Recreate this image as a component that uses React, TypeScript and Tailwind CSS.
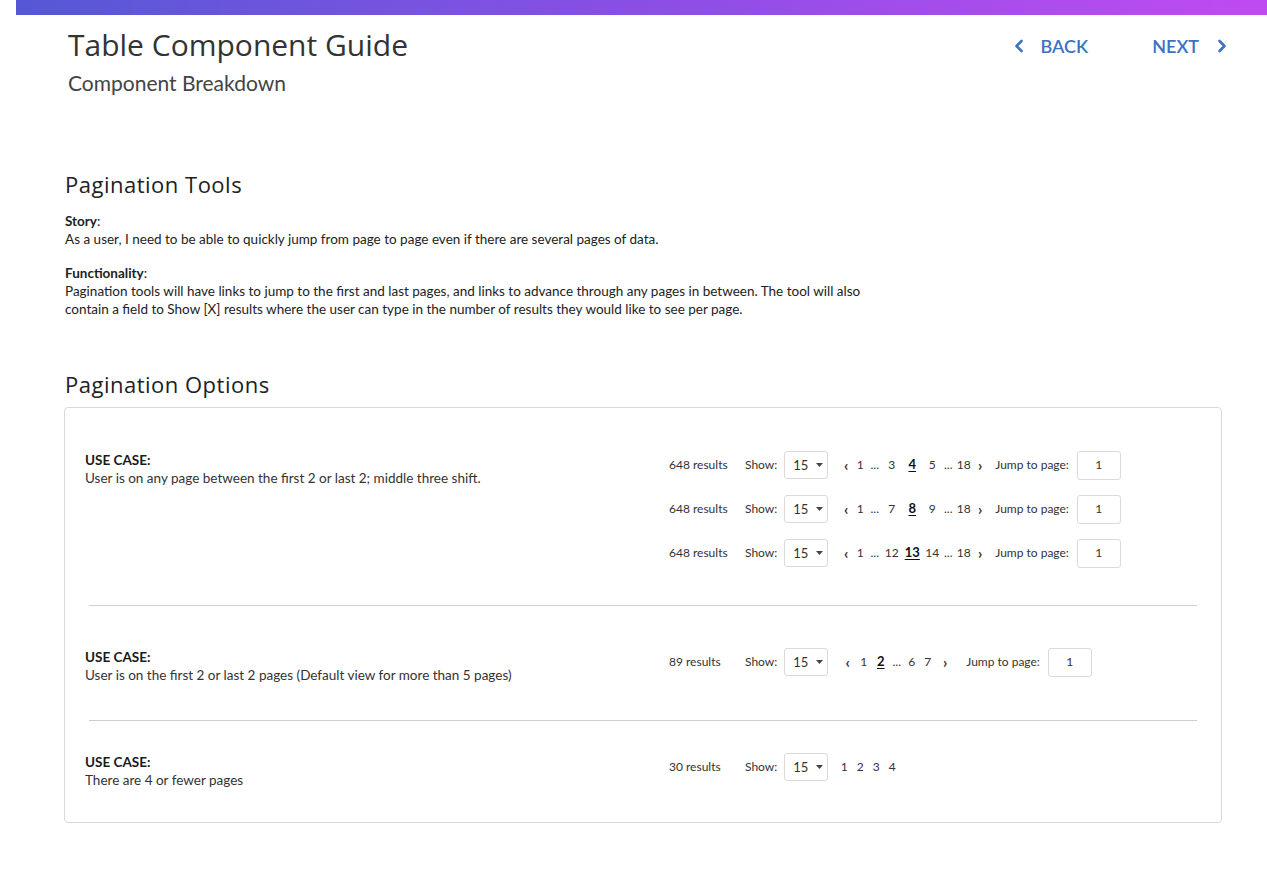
import React from "react";

const Chevron = ({ dir }: { dir: "left" | "right" }) => (
  <svg width="10" height="14" viewBox="0 0 10 14" fill="none" stroke="currentColor" strokeWidth="2.6" strokeLinecap="round" strokeLinejoin="round">
    {dir === "left" ? <path d="M7.5 2 L2.5 7 L7.5 12" /> : <path d="M2.5 2 L7.5 7 L2.5 12" />}
  </svg>
);

const SelectBox = ({ className = "" }: { className?: string }) => (
  <div className={`flex h-[28px] w-[44px] items-center rounded-[3px] border border-[#dadada] bg-white pl-[8px] ${className}`}>
    <span className="text-[13px] leading-none">15</span>
    <svg className="ml-[8px]" width="7" height="4" viewBox="0 0 7 4">
      <path d="M0 0 L7 0 L3.5 4 Z" fill="#444" />
    </svg>
  </div>
);

const JumpBox = () => (
  <div className="ml-[8px] flex h-[29px] w-[44px] items-center justify-center rounded-[3px] border border-[#dadada] bg-white text-[12px]">
    1
  </div>
);

type Slot = { label: string; w: number; active?: boolean };

const Pager = ({ slots, className = "" }: { slots: Slot[]; className?: string }) => (
  <div className={`flex items-center ${className}`}>
    {slots.map((s, i) => {
      const arrow = s.label === "‹" || s.label === "›";
      return (
        <span
          key={i}
          style={{ width: s.w }}
          className={`text-center ${s.active ? "font-bold text-[13px] text-[#111] underline underline-offset-2" : ""} ${arrow ? "text-[15px] leading-none font-bold" : ""}`}
        >
          {s.label}
        </span>
      );
    })}
  </div>
);

const ControlRow = ({
  results,
  slots,
  pagerMl,
  jumpMl,
  jump = true,
}: {
  results: string;
  slots: Slot[];
  pagerMl: string;
  jumpMl?: string;
  jump?: boolean;
}) => (
  <div className="flex h-[28px] items-center text-[12px] text-[#333]">
    <span className="w-[60px] whitespace-nowrap">{results}</span>
    <span className="ml-[16px]">Show:</span>
    <SelectBox className="ml-[7px]" />
    <Pager slots={slots} className={pagerMl} />
    {jump && (
      <>
        <span className={`whitespace-nowrap ${jumpMl}`}>Jump to page:</span>
        <JumpBox />
      </>
    )}
  </div>
);

const mid = (a: string, b: string, c: string): Slot[] => [
  { label: "‹", w: 14 },
  { label: "1", w: 14 },
  { label: "...", w: 15 },
  { label: a, w: 19 },
  { label: b, w: 22, active: true },
  { label: c, w: 18 },
  { label: "...", w: 14 },
  { label: "18", w: 17 },
  { label: "›", w: 16 },
];

const UseCase = ({ text }: { text: string }) => (
  <div className="w-[584px] shrink-0 text-[13.5px] leading-[18px] text-[#333]">
    <div className="font-bold text-[#1a1a1a]">USE CASE:</div>
    <div>{text}</div>
  </div>
);

export default function App() {
  return (
    <div className="min-h-[874px] bg-white font-['Lato','Liberation_Sans',sans-serif] text-[#333]">
      <div className="ml-[16px] h-[15px] bg-gradient-to-r from-[#5458d6] via-[#8a4ee6] to-[#c04af2]" />

      <div className="flex items-start justify-between pl-[68px] pr-[40px] pt-[12px]">
        <div>
          <h1 className="font-['Open_Sans',sans-serif] text-[30px] leading-[36px] text-[#333]">Table Component Guide</h1>
          <div className="mt-[8px] text-[21px] leading-[24px] text-[#444]">Component Breakdown</div>
        </div>
        <div className="mt-[7px] flex items-center text-[18px] font-semibold leading-[24px] text-[#3b72c2]">
          <Chevron dir="left" />
          <span className="ml-[17px]">BACK</span>
          <span className="ml-[64px]">NEXT</span>
          <span className="ml-[18px]">
            <Chevron dir="right" />
          </span>
        </div>
      </div>

      <div className="pl-[64px] pr-[45px]">
        <h2 className="mt-[75px] pl-[1px] font-['Open_Sans',sans-serif] text-[22px] leading-[28px] tracking-[0.5px] text-[#222]">Pagination Tools</h2>

        <div className="mt-[14px] max-w-[830px] pl-[1px] text-[13.5px] leading-[18px] text-[#222]">
          <p>
            <span className="font-bold">Story</span>:
          </p>
          <p>As a user, I need to be able to quickly jump from page to page even if there are several pages of data.</p>
          <p className="mt-[16px]">
            <span className="font-bold">Functionality</span>:
          </p>
          <p>
            Pagination tools will have links to jump to the first and last pages, and links to advance through any pages in between. The tool will also contain a field to Show [X] results where the user can type in the number of results they would like to see per page.
          </p>
        </div>

        <h2 className="mt-[52px] pl-[1px] font-['Open_Sans',sans-serif] text-[22px] leading-[28px] tracking-[0.5px] text-[#222]">Pagination Options</h2>

        <div className="mt-[9px] rounded-[4px] border border-[#d9d9d9] bg-white">
          <div className="flex items-start px-[20px] pb-[38px] pt-[43px]">
            <UseCase text="User is on any page between the first 2 or last 2; middle three shift." />
            <div className="flex flex-col gap-[16px]">
              <ControlRow results="648 results" slots={mid("3", "4", "5")} pagerMl="ml-[11px]" jumpMl="ml-[7px]" />
              <ControlRow results="648 results" slots={mid("7", "8", "9")} pagerMl="ml-[11px]" jumpMl="ml-[7px]" />
              <ControlRow results="648 results" slots={mid("12", "13", "14")} pagerMl="ml-[11px]" jumpMl="ml-[7px]" />
            </div>
          </div>

          <div className="mx-[24px] h-px bg-[#cfcfcf]" />

          <div className="flex items-start px-[20px] pb-[36px] pt-[42px]">
            <UseCase text="User is on the first 2 or last 2 pages (Default view for more than 5 pages)" />
            <ControlRow
              results="89 results"
              slots={[
                { label: "‹", w: 15 },
                { label: "1", w: 17 },
                { label: "2", w: 17, active: true },
                { label: "...", w: 15 },
                { label: "6", w: 15 },
                { label: "7", w: 17 },
                { label: "›", w: 18 },
              ]}
              pagerMl="ml-[12px]"
              jumpMl="ml-[12px]"
            />
          </div>

          <div className="mx-[24px] h-px bg-[#cfcfcf]" />

          <div className="flex items-start px-[20px] pb-[33px] pt-[32px]">
            <UseCase text="There are 4 or fewer pages" />
            <ControlRow
              results="30 results"
              slots={[
                { label: "1", w: 16 },
                { label: "2", w: 16 },
                { label: "3", w: 16 },
                { label: "4", w: 16 },
              ]}
              pagerMl="ml-[8px]"
              jump={false}
            />
          </div>
        </div>
      </div>
    </div>
  );
}
